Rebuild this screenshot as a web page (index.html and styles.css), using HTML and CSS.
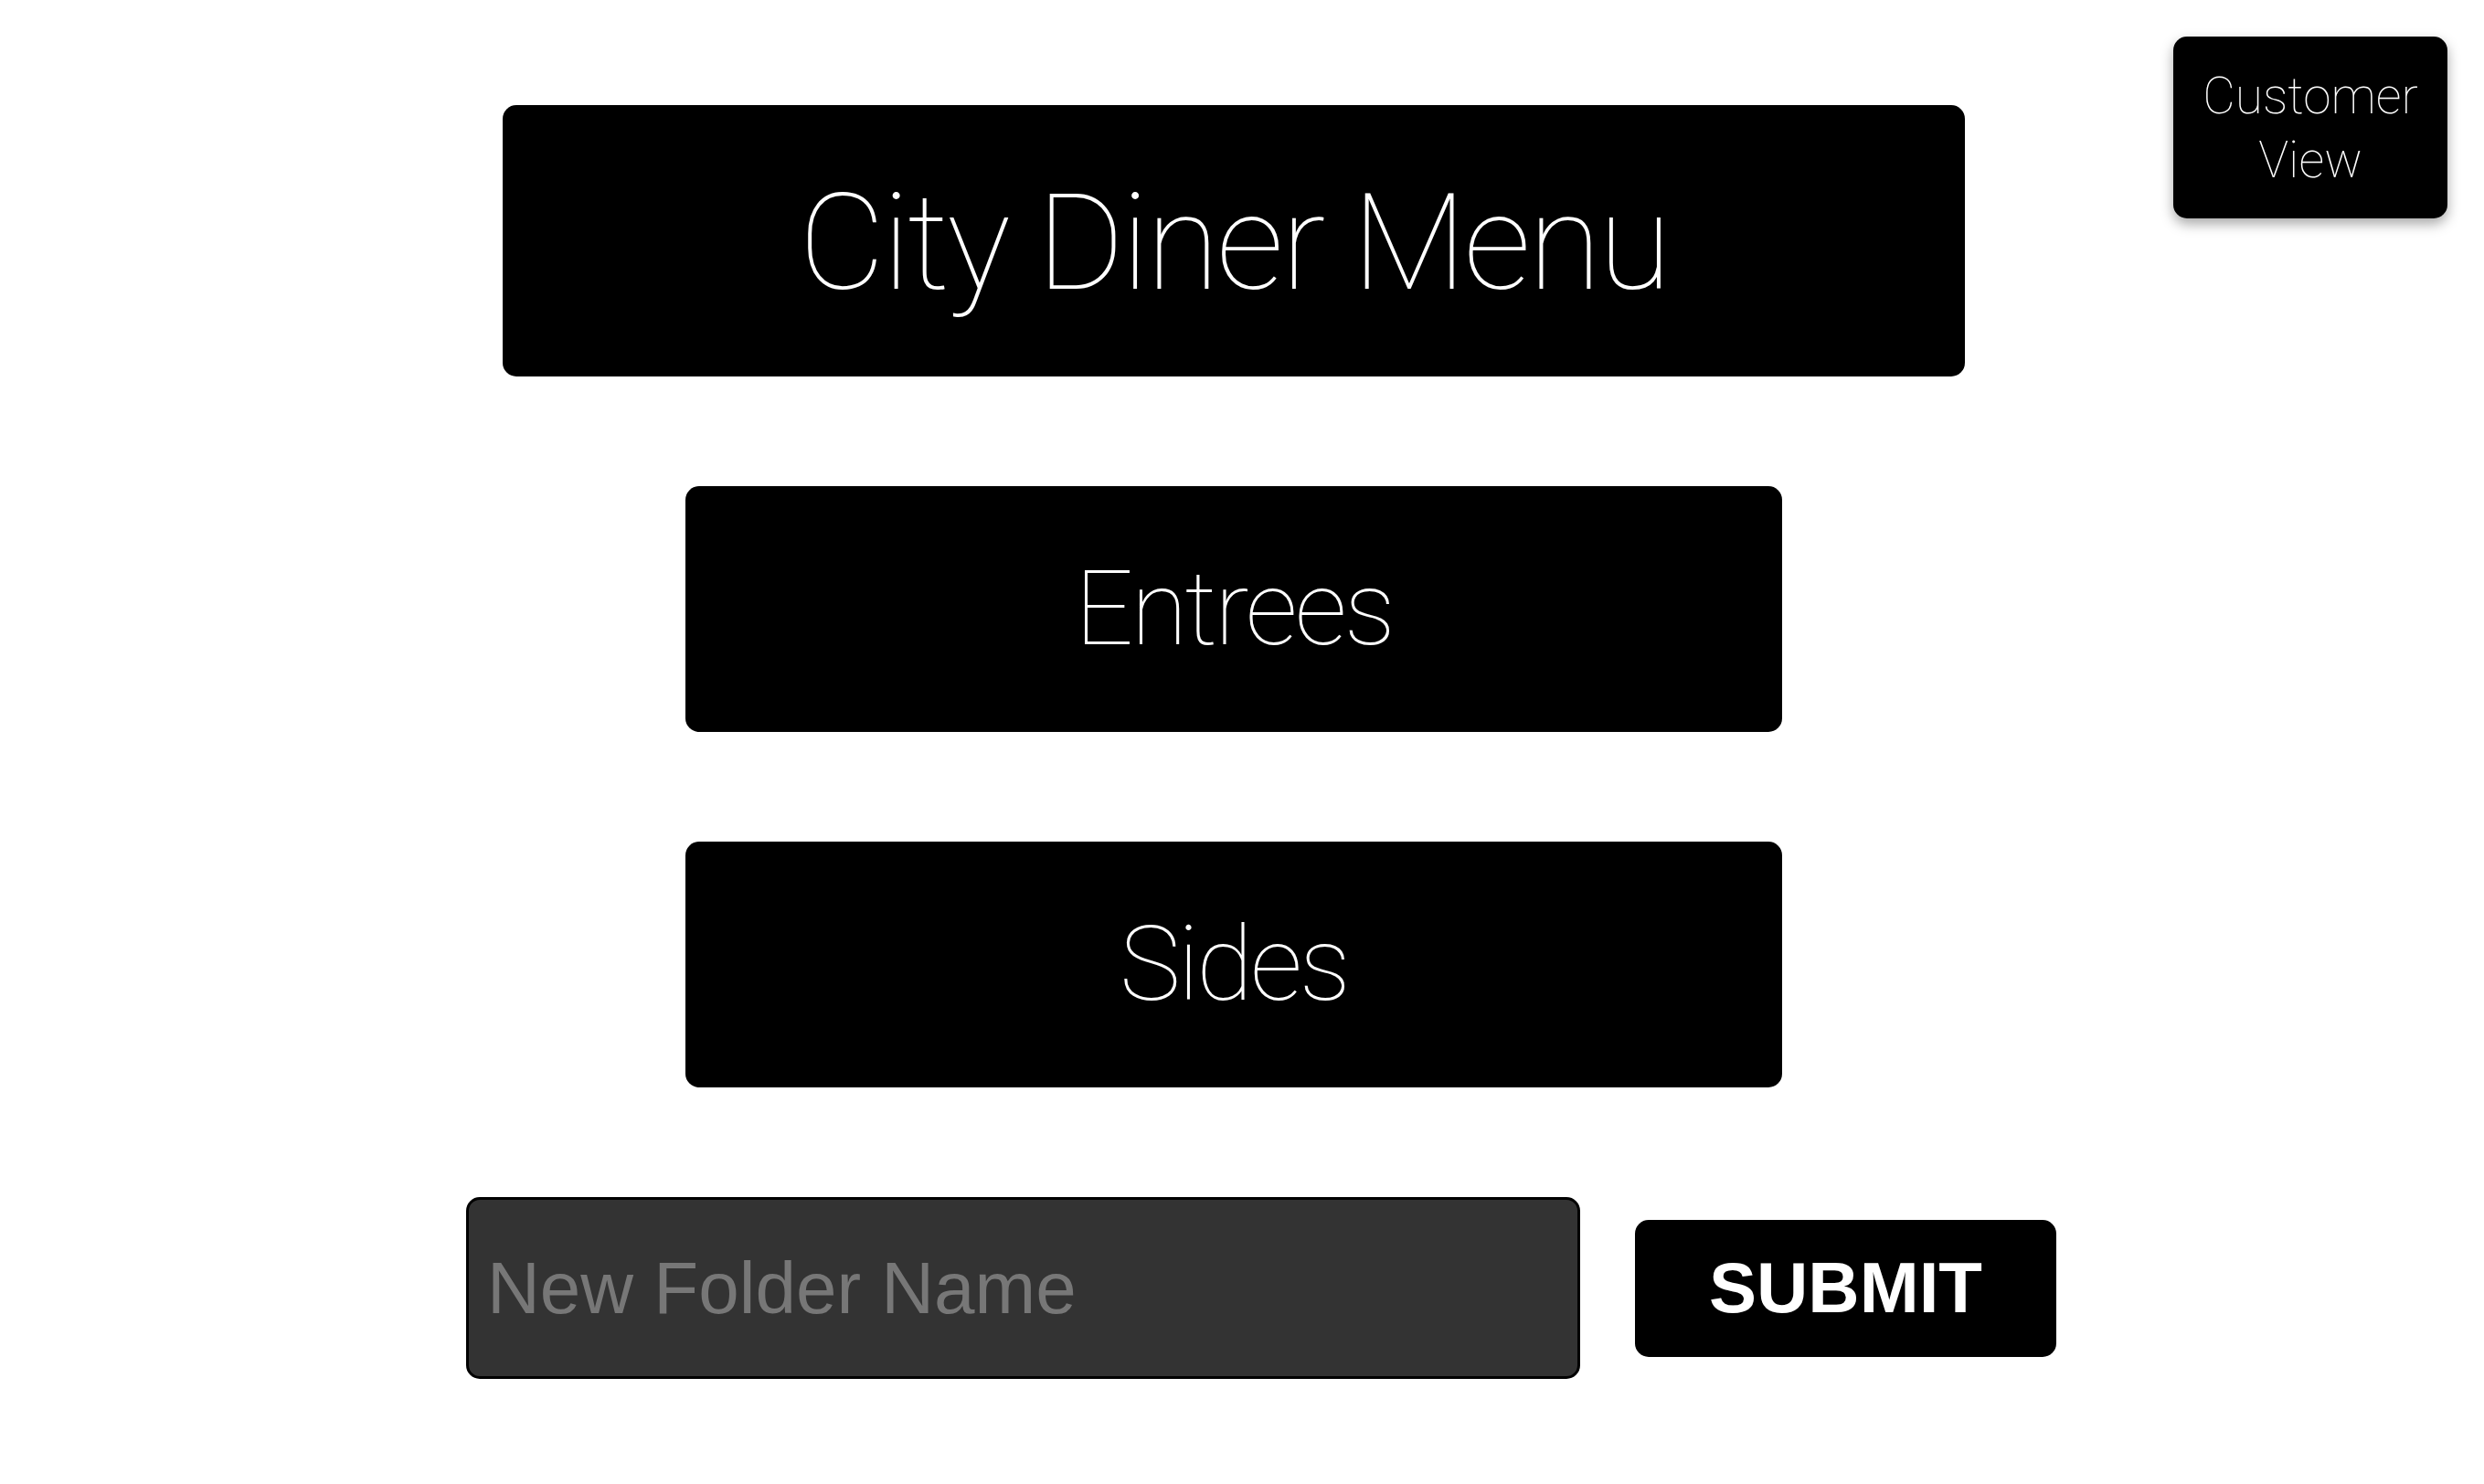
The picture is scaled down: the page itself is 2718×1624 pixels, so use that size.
FILE: index.html
```html
<!doctype html>
<html lang="en">
<head>
  <title>City Diner Menu</title>
  <meta charset="UTF-8">
  <meta name="viewport" content="width=device-width, initial-scale=1">
  <link rel="stylesheet" href="styles.css">
</head>
<body>
  <button type="button" class="view-btn">Customer<br>View</button>
  <div class="page">
    <div class="menu-title">City Diner Menu</div>
    <button type="button" class="folder">Entrees</button>
    <button type="button" class="folder">Sides</button>
    <form class="new-folder">
      <input type="text" class="folder-input" placeholder="New Folder Name" />
      <button type="button" class="submit-btn">SUBMIT</button>
    </form>
  </div>
</body>
</html>
```
FILE: styles.css
```css
body {
  font-family: Roboto, 'Noto Sans', Arial, sans-serif;
  font-weight: 100;
  background: #fff;
  margin: 0;
  min-height: 100vh;
}
.page {
  width: 2700px;
  padding-top: 115px;
  display: flex;
  flex-direction: column;
  align-items: center;
  gap: 120px;
}
.menu-title {
  width: 1600px;
  height: 297px;
  background: #000;
  color: #fff;
  border-radius: 15px;
  display: flex;
  align-items: center;
  justify-content: center;
  font-size: 146px;
  letter-spacing: -3px;
  padding-top: 6px;
  box-sizing: border-box;
}
.folder {
  width: 1200px;
  height: 269px;
  background: #000;
  color: #fff;
  border: none;
  border-radius: 15px;
  font-family: Roboto, 'Noto Sans', Arial, sans-serif;
  font-weight: 100;
  font-size: 113px;
  letter-spacing: -3px;
  cursor: pointer;
}
.new-folder {
  display: flex;
  align-items: center;
  gap: 60px;
  margin: 0 0 0 60px;
}
.folder-input {
  width: 1219px;
  height: 199px;
  box-sizing: border-box;
  background: #333;
  border: 3px solid #000;
  border-radius: 15px;
  padding: 0 20px;
  font-family: 'Liberation Sans', Arial, sans-serif;
  font-size: 80px;
  color: #fff;
  outline: none;
}
.folder-input::placeholder {
  color: #777;
}
.submit-btn {
  width: 461px;
  height: 150px;
  background: #000;
  color: #fff;
  border: none;
  border-radius: 15px;
  font-family: 'Liberation Sans', Arial, sans-serif;
  font-weight: 700;
  font-size: 78px;
  cursor: pointer;
}
.view-btn {
  position: absolute;
  top: 40px;
  right: 40px;
  width: 300px;
  height: 199px;
  background: #000;
  color: #fff;
  border: none;
  border-radius: 15px;
  box-shadow: 0 6px 14px rgba(0, 0, 0, 0.35);
  font-family: Roboto, 'Noto Sans', Arial, sans-serif;
  font-weight: 100;
  font-size: 55px;
  line-height: 70px;
  cursor: pointer;
}
```
